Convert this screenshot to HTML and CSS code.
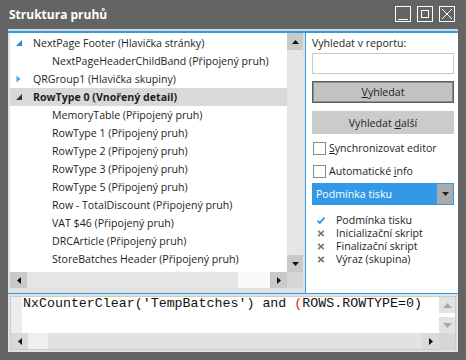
FILE: index.html
```html
<!DOCTYPE html>
<html lang="cs">
<head>
    <meta charset="UTF-8">
    <title>Struktura pruhů</title>
    <link rel="stylesheet" href="styles.css">
</head>
<body>
    <div class="window">
        <div class="titlebar">
            <span class="title">Struktura pruhů</span>
            <div class="win-buttons">
                <svg class="win-btn" width="16" height="16" viewBox="0 0 16 16"><rect x="0.5" y="0.5" width="15" height="15" fill="none" stroke="#fff"/><line x1="3" y1="13.5" x2="13" y2="13.5" stroke="#fff"/></svg>
                <svg class="win-btn" width="16" height="16" viewBox="0 0 16 16"><rect x="0.5" y="0.5" width="15" height="15" fill="none" stroke="#fff"/><rect x="4.5" y="4.5" width="7" height="7" fill="none" stroke="#fff"/></svg>
                <svg class="win-btn" width="16" height="16" viewBox="0 0 16 16"><rect x="0.5" y="0.5" width="15" height="15" fill="none" stroke="#fff"/><path d="M3 3 L13 13 M13 3 L3 13" stroke="#fff"/></svg>
            </div>
        </div>

        <div class="client">
            <div class="accent"></div>

            <div class="top">
                <!-- Tree of bands -->
                <div class="tree-pane">
                    <ul class="tree">
                        <li class="node lvl0"><span class="toggle"><svg width="6" height="6" viewBox="0 0 6 6"><polygon points="6,0 6,6 0,6" fill="#1f8ad8"/></svg></span>NextPage Footer (Hlavička stránky)</li>
                        <li class="node lvl1">NextPageHeaderChildBand (Připojený pruh)</li>
                        <li class="node lvl0"><span class="toggle"><svg width="5" height="8" viewBox="0 0 5 8"><polygon points="0.5,0.5 4.5,4 0.5,7.5" fill="#4da3e0"/></svg></span>QRGroup1 (Hlavička skupiny)</li>
                        <li class="node lvl0 selected"><span class="toggle"><svg width="6" height="6" viewBox="0 0 6 6"><polygon points="6,0 6,6 0,6" fill="#333"/></svg></span>RowType 0 (Vnořený detail)</li>
                        <li class="node lvl1">MemoryTable (Připojený pruh)</li>
                        <li class="node lvl1">RowType 1 (Připojený pruh)</li>
                        <li class="node lvl1">RowType 2 (Připojený pruh)</li>
                        <li class="node lvl1">RowType 3 (Připojený pruh)</li>
                        <li class="node lvl1">RowType 5 (Připojený pruh)</li>
                        <li class="node lvl1">Row - TotalDiscount (Připojený pruh)</li>
                        <li class="node lvl1">VAT $46 (Připojený pruh)</li>
                        <li class="node lvl1">DRCArticle (Připojený pruh)</li>
                        <li class="node lvl1">StoreBatches Header (Připojený pruh)</li>
                    </ul>
                    <div class="vscroll">
                        <span class="arrow-box"><svg width="7" height="4" viewBox="0 0 7 4"><polygon points="3.5,0 7,4 0,4" fill="#111"/></svg></span>
                        <span class="track"></span>
                        <span class="arrow-box"><svg width="7" height="4" viewBox="0 0 7 4"><polygon points="0,0 7,0 3.5,4" fill="#111"/></svg></span>
                    </div>
                    <div class="hscroll">
                        <span class="arrow-box"><svg width="4" height="7" viewBox="0 0 4 7"><polygon points="4,0 4,7 0,3.5" fill="#111"/></svg></span>
                        <span class="thumb"></span>
                        <span class="rest"></span>
                        <span class="arrow-box"><svg width="4" height="7" viewBox="0 0 4 7"><polygon points="0,0 4,3.5 0,7" fill="#111"/></svg></span>
                    </div>
                    <div class="corner"></div>
                </div>
                <div class="gap"></div>
                <div class="vsplit"></div>

                <!-- Search and options -->
                <div class="side">
                    <div class="side-label">Vyhledat v reportu:</div>
                    <div class="search-input"></div>
                    <button class="btn btn-main"><u>V</u>yhledat</button>
                    <button class="btn btn-next">Vyhledat <u>d</u>alší</button>
                    <label class="check"><span class="box"></span><span><u>S</u>ynchronizovat editor</span></label>
                    <label class="check check-2"><span class="box"></span><span>Automatické <u>i</u>nfo</span></label>
                    <div class="dropdown">
                        <span>Podmínka tisku</span>
                        <span class="drop-arrow"><svg width="7" height="4" viewBox="0 0 7 4"><polygon points="0,0 7,0 3.5,4" fill="#222"/></svg></span>
                    </div>
                    <ul class="events">
                        <li><svg class="ico" width="8" height="7" viewBox="0 0 8 7"><path d="M0.6 3.6 L2.8 6 L7.4 0.6" fill="none" stroke="#2b8fdc" stroke-width="1.7"/></svg>Podmínka tisku</li>
                        <li><svg class="ico" width="8" height="7" viewBox="0 0 8 7"><path d="M1.2 0.8 L6.8 6.2 M6.8 0.8 L1.2 6.2" stroke="#7d7d7d" stroke-width="1.8"/></svg>Inicializační skript</li>
                        <li><svg class="ico" width="8" height="7" viewBox="0 0 8 7"><path d="M1.2 0.8 L6.8 6.2 M6.8 0.8 L1.2 6.2" stroke="#7d7d7d" stroke-width="1.8"/></svg>Finalizační skript</li>
                        <li><svg class="ico" width="8" height="7" viewBox="0 0 8 7"><path d="M1.2 0.8 L6.8 6.2 M6.8 0.8 L1.2 6.2" stroke="#7d7d7d" stroke-width="1.8"/></svg>Výraz (skupina)</li>
                    </ul>
                </div>
            </div>

            <div class="hsplit"></div>

            <!-- Script editor -->
            <div class="editor">
                <div class="code-area">
                    <div class="gutter"></div>
                    <div class="code">NxCounterClear('TempBatches') and <span class="paren">(</span>ROWS.ROWTYPE=0)</div>
                </div>
                <div class="ed-vscroll">
                    <span class="arrow-box"><svg width="9" height="5" viewBox="0 0 9 5"><polygon points="4.5,0 9,5 0,5" fill="#a8a8a8"/></svg></span>
                    <span class="track"></span>
                    <span class="arrow-box"><svg width="9" height="5" viewBox="0 0 9 5"><polygon points="0,0 9,0 4.5,5" fill="#a8a8a8"/></svg></span>
                </div>
                <div class="ed-hscroll">
                    <span class="arrow-box"><svg width="4" height="7" viewBox="0 0 4 7"><polygon points="4,0 4,7 0,3.5" fill="#111"/></svg></span>
                    <span class="thumb"></span>
                    <span class="rest"></span>
                    <span class="arrow-box"><svg width="4" height="7" viewBox="0 0 4 7"><polygon points="0,0 4,3.5 0,7" fill="#111"/></svg></span>
                </div>
                <div class="corner"></div>
            </div>
        </div>
    </div>
</body>
</html>
```

FILE: styles.css
```css
* {
    margin: 0;
    padding: 0;
    box-sizing: border-box;
}

body {
    background: #646464;
    font-family: "Open Sans", "Liberation Sans", sans-serif;
    font-size: 10.6px;
    color: #1e1e1e;
}

.window {
    width: 466px;
    height: 360px;
    display: flex;
    flex-direction: column;
    padding: 0 8px 8px;
}

/* Title bar */
.titlebar {
    height: 29px;
    display: flex;
    align-items: center;
    justify-content: space-between;
    padding: 0 3px 1px 1px;
}

.title {
    color: #fff;
    font-weight: bold;
    font-size: 12px;
}

.win-buttons {
    display: flex;
    gap: 6px;
}

.win-btn {
    display: block;
}

/* Client area */
.client {
    flex: 1;
    display: flex;
    flex-direction: column;
    background: #e2e2e2;
    border-top: 2px solid #d4d4d4;
}

.accent {
    height: 2px;
    background: #2b9de3;
}

.top {
    height: 260px;
    display: flex;
    padding-left: 2px;
}

.gap {
    width: 2px;
}

.vsplit {
    width: 1px;
    background: #2b9de3;
}

.hsplit {
    height: 1px;
    background: #2b9de3;
}

/* Tree */
.tree-pane {
    width: 293px;
    height: 255px;
    display: grid;
    grid-template-columns: 277px 16px;
    grid-template-rows: 239px 16px;
    background: #fff;
}

.tree {
    list-style: none;
    padding-top: 1px;
    overflow: hidden;
}

.node {
    height: 18px;
    line-height: 18px;
    display: flex;
    align-items: center;
    white-space: nowrap;
}

.lvl0 {
    padding-left: 6px;
}

.lvl1 {
    padding-left: 42px;
}

.toggle {
    width: 17px;
    display: flex;
    align-items: center;
}

.toggle svg {
    display: block;
}

.selected {
    background: #d9d9d9;
    font-weight: bold;
}

.arrow-box {
    display: flex;
    align-items: center;
    justify-content: center;
    background: #c9c9c9;
}

.arrow-box svg {
    display: block;
}

.vscroll {
    display: flex;
    flex-direction: column;
    background: #e6e6e6;
}

.vscroll .arrow-box {
    height: 17px;
}

.vscroll .track {
    flex: 1;
}

.hscroll {
    display: flex;
    background: #e6e6e6;
}

.hscroll .arrow-box {
    width: 17px;
}

.hscroll .thumb {
    width: 211px;
}

.hscroll .rest {
    flex: 1;
    background: #fafafa;
}

.corner {
    background: #d6d6d6;
}

/* Right panel */
.side {
    flex: 1;
    background: #fff;
    padding: 2px 4px 0 6px;
    display: flex;
    flex-direction: column;
}

.side-label {
    line-height: 16px;
}

.search-input {
    height: 21px;
    margin-top: 2px;
    border: 1px solid #c8c8c8;
}

.btn {
    font: inherit;
    color: inherit;
    border: none;
    background: #cbcbcb;
    text-align: center;
}

.btn-main {
    height: 22px;
    margin-top: 7px;
    background: #c3c3c3;
    border: 1px solid #5f5f5f;
    box-shadow: inset 0 0 0 1px #8c8c8c;
}

.btn-next {
    height: 23px;
    margin-top: 8px;
}

.check {
    display: flex;
    align-items: center;
    gap: 3px;
    height: 16px;
    margin-top: 6px;
    padding-left: 1px;
}

.check-2 {
    margin-top: 7px;
}

.box {
    width: 13px;
    height: 13px;
    border: 1px solid #8a8a8a;
    background: #fff;
}

.dropdown {
    height: 22px;
    margin-top: 4px;
    background: #3399e6;
    color: #fff;
    display: flex;
    align-items: center;
    justify-content: space-between;
    padding: 1px 1px 1px 4px;
}

.drop-arrow {
    width: 16px;
    height: 20px;
    background: #ababab;
    display: flex;
    align-items: center;
    justify-content: center;
}

.events {
    list-style: none;
    margin-top: 9px;
    padding-left: 5px;
}

.events li {
    height: 13px;
    line-height: 13px;
    display: flex;
    align-items: center;
}

.ico {
    display: block;
    margin-right: 11px;
}

/* Editor */
.editor {
    height: 54px;
    margin: 2px 2px 2px;
    border: 1px solid #cccccc;
    background: #fff;
    display: grid;
    grid-template-columns: 1fr 16px;
    grid-template-rows: 1fr 16px;
}

.code-area {
    display: flex;
}

.gutter {
    width: 11px;
    background: #ececec;
}

.code {
    font-family: "Liberation Mono", "Courier New", monospace;
    font-size: 13.3px;
    line-height: 13px;
    padding-left: 1px;
    color: #111;
    white-space: pre;
}

.paren {
    color: #e3162e;
}

.ed-vscroll {
    display: flex;
    flex-direction: column;
    background: #fff;
}

.ed-vscroll .arrow-box {
    height: 16px;
    background: #e2e2e2;
}

.ed-vscroll .track {
    flex: 1;
}

.ed-hscroll {
    display: flex;
    background: #e2e2e2;
}

.ed-hscroll .arrow-box {
    width: 17px;
    background: #dadada;
}

.ed-hscroll .thumb {
    width: 20px;
    background: #efefef;
}

.ed-hscroll .rest {
    flex: 1;
}
```
